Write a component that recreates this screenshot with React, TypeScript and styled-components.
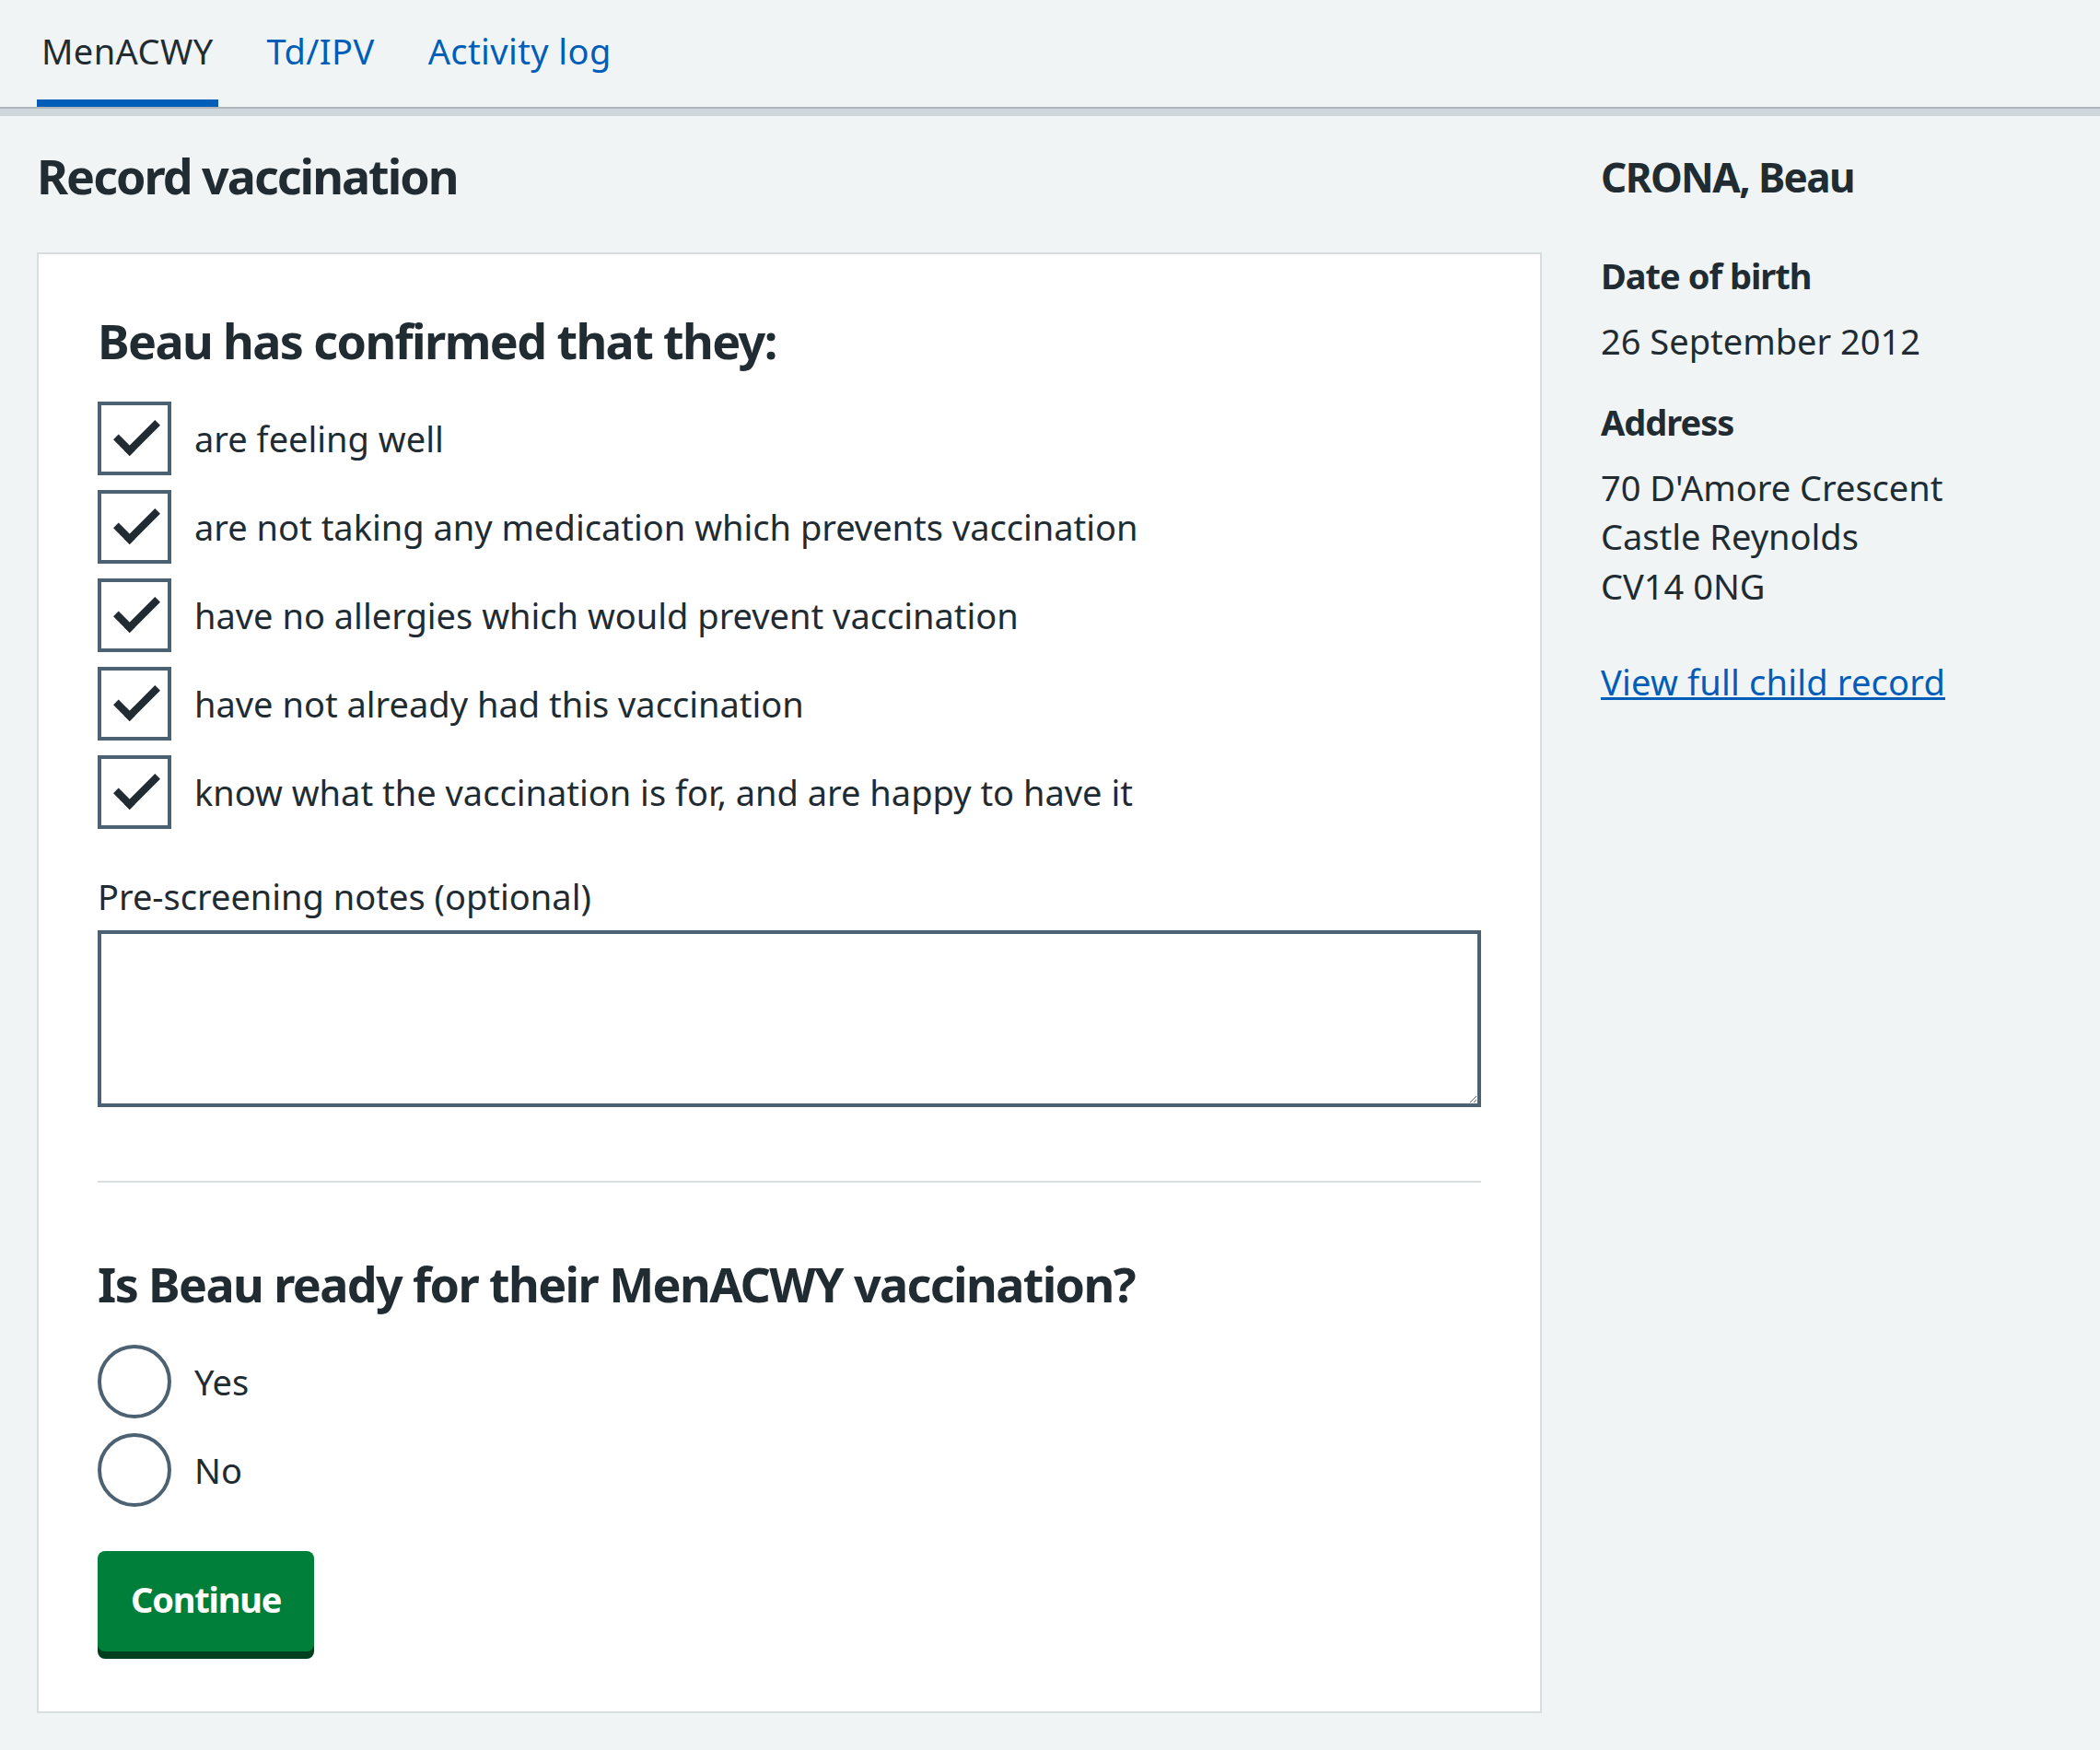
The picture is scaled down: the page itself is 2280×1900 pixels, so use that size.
import React from "react";
import styled, { createGlobalStyle } from "styled-components";

const GlobalStyle = createGlobalStyle`
  html, body {
    margin: 0;
    padding: 0;
    background: #f0f4f5;
  }
  body {
    font-family: "Noto Sans", "Open Sans", Arial, sans-serif;
    color: #212b32;
    -webkit-font-smoothing: antialiased;
  }
`;

const TabBar = styled.nav`
  display: flex;
  gap: 48px;
  padding: 0 40px;
  border-bottom: 2px solid #aeb7bd;
  box-shadow: 0 8px 0 0 #cfd7da;
`;

const Tab = styled.a<{ $active?: boolean }>`
  display: block;
  padding: 27px 5px 25px;
  font-size: 38px;
  line-height: 56px;
  letter-spacing: 0.4px;
  text-decoration: none;
  color: ${(p) => (p.$active ? "#212b32" : "#005eb8")};
  border-bottom: 8px solid ${(p) => (p.$active ? "#005eb8" : "transparent")};
`;

const Main = styled.main`
  display: grid;
  grid-template-columns: 1634px 1fr;
  column-gap: 64px;
  padding: 42px 40px 40px;
  align-items: start;
`;

const PageTitle = styled.h1`
  margin: 0 0 52px;
  font-size: 52px;
  line-height: 62px;
  font-weight: 700;
  letter-spacing: -2px;
`;

const Card = styled.div`
  background: #fff;
  border: 2px solid #d8dde0;
  padding: 64px 64px 65px;
`;

const SectionHeading = styled.h2`
  margin: 0 0 36px;
  font-size: 52px;
  line-height: 60px;
  font-weight: 700;
  letter-spacing: -1.6px;
`;

const OptionList = styled.div<{ $after?: number }>`
  display: flex;
  flex-direction: column;
  gap: 16px;
  margin-bottom: ${(p) => p.$after ?? 0}px;
`;

const OptionRow = styled.label`
  display: flex;
  align-items: center;
  gap: 25px;
  font-size: 38px;
  line-height: 56px;
`;

const CheckBox = styled.span`
  flex: 0 0 auto;
  position: relative;
  width: 80px;
  height: 80px;
  box-sizing: border-box;
  border: 4px solid #4c6272;
  background: #fff;

  &::after {
    content: "";
    position: absolute;
    left: 15px;
    top: 17px;
    width: 39px;
    height: 17px;
    border: solid #212b32;
    border-width: 0 0 8px 8px;
    transform: rotate(-45deg);
  }
`;

const RadioCircle = styled.span`
  flex: 0 0 auto;
  width: 80px;
  height: 80px;
  box-sizing: border-box;
  border: 4px solid #4c6272;
  border-radius: 50%;
  background: #fff;
`;

const FieldLabel = styled.label`
  display: block;
  font-size: 38px;
  line-height: 56px;
  margin-bottom: 9px;
`;

const NotesArea = styled.textarea`
  display: block;
  width: 100%;
  height: 192px;
  box-sizing: border-box;
  margin: 0;
  padding: 8px;
  border: 4px solid #4c6272;
  border-radius: 0;
  background: #fff;
  font-family: inherit;
  font-size: 38px;
  color: #212b32;
  outline: none;
`;

const Divider = styled.hr`
  border: 0;
  border-top: 2px solid #d8dde0;
  margin: 80px 0 80px;
`;

const PrimaryButton = styled.button`
  display: inline-block;
  margin-top: 48px;
  padding: 22px 34px 26px;
  border: 2px solid transparent;
  border-radius: 8px;
  background: #007f3b;
  box-shadow: 0 8px 0 0 #00401e;
  color: #fff;
  font-family: inherit;
  font-size: 38px;
  line-height: 57px;
  font-weight: 700;
  letter-spacing: -1.2px;
  cursor: pointer;
`;

const Aside = styled.aside`
  padding-top: 6px;
`;

const PatientName = styled.h2`
  margin: 0 0 54px;
  font-size: 44px;
  line-height: 53px;
  font-weight: 700;
  letter-spacing: -1.6px;
`;

const Details = styled.dl`
  margin: 0;
`;

const DetailTerm = styled.dt`
  margin: 0 0 17px;
  font-size: 38px;
  line-height: 53.5px;
  font-weight: 700;
  letter-spacing: -1px;
`;

const DetailValue = styled.dd`
  margin: 0 0 35px;
  font-size: 38px;
  line-height: 53.5px;
`;

const RecordLink = styled.a`
  display: inline-block;
  margin-top: 16px;
  font-size: 38px;
  line-height: 53.5px;
  letter-spacing: 0.2px;
  color: #005eb8;
  text-decoration: underline;
  text-decoration-thickness: 3px;
  text-underline-offset: 2px;
`;

const checks = [
  "are feeling well",
  "are not taking any medication which prevents vaccination",
  "have no allergies which would prevent vaccination",
  "have not already had this vaccination",
  "know what the vaccination is for, and are happy to have it",
];

export default function App() {
  return (
    <>
      <GlobalStyle />
      <TabBar>
        <Tab $active href="#">MenACWY</Tab>
        <Tab href="#">Td/IPV</Tab>
        <Tab href="#">Activity log</Tab>
      </TabBar>
      <Main>
        <section>
          <PageTitle>Record vaccination</PageTitle>
          <Card>
            <SectionHeading>Beau has confirmed that they:</SectionHeading>
            <OptionList $after={45}>
              {checks.map((c) => (
                <OptionRow key={c}>
                  <CheckBox />
                  {c}
                </OptionRow>
              ))}
            </OptionList>
            <FieldLabel htmlFor="notes">Pre-screening notes (optional)</FieldLabel>
            <NotesArea id="notes" />
            <Divider />
            <SectionHeading>Is Beau ready for their MenACWY vaccination?</SectionHeading>
            <OptionList>
              <OptionRow>
                <RadioCircle />
                Yes
              </OptionRow>
              <OptionRow>
                <RadioCircle />
                No
              </OptionRow>
            </OptionList>
            <PrimaryButton type="button">Continue</PrimaryButton>
          </Card>
        </section>
        <Aside>
          <PatientName>CRONA, Beau</PatientName>
          <Details>
            <DetailTerm>Date of birth</DetailTerm>
            <DetailValue>26 September 2012</DetailValue>
            <DetailTerm>Address</DetailTerm>
            <DetailValue>
              70 D'Amore Crescent
              <br />
              Castle Reynolds
              <br />
              CV14 0NG
            </DetailValue>
          </Details>
          <RecordLink href="#">View full child record</RecordLink>
        </Aside>
      </Main>
    </>
  );
}
